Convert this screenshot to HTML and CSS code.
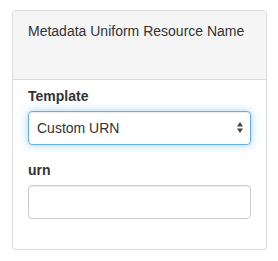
FILE: index.html
```html
<!DOCTYPE html>
<html lang="en">
<head>
    <meta charset="UTF-8">
    <meta name="viewport" content="width=device-width, initial-scale=1.0">
    <title>Metadata URN</title>
    <link rel="stylesheet" href="styles.css">
</head>
<body>
    <div class="panel">
        <!-- Heading -->
        <div class="panel-heading">Metadata Uniform Resource Name</div>

        <!-- Form -->
        <div class="panel-body">
            <div class="form-group">
                <label for="template">Template</label>
                <div class="select-wrap">
                    <select id="template" class="form-control focused">
                        <option>Custom URN</option>
                    </select>
                    <svg class="select-arrows" width="6" height="11" viewBox="0 0 6 11">
                        <path d="M3 0 L6 4.5 L0 4.5 Z" fill="#444"/>
                        <path d="M0 6.5 L6 6.5 L3 11 Z" fill="#444"/>
                    </svg>
                </div>
            </div>
            <div class="form-group">
                <label for="urn">urn</label>
                <input type="text" id="urn" class="form-control">
            </div>
        </div>
    </div>
</body>
</html>
```

FILE: styles.css
```css
body {
    font-family: "Liberation Sans", Arial, sans-serif;
    font-size: 14px;
    line-height: 20px;
    margin: 0;
    padding: 10px 11px 0 12px;
    background-color: #fff;
    color: #333;
}
.panel {
    border: 1px solid #ddd;
    border-radius: 4px;
    box-shadow: 0 1px 1px rgba(0,0,0,0.05);
    background-color: #fff;
}
.panel-heading {
    background-color: #f5f5f5;
    border-bottom: 1px solid #ddd;
    border-radius: 3px 3px 0 0;
    padding: 10px 15px 38px;
    color: #333;
}
.panel-body {
    padding: 6px 15px 15px;
}
.form-group {
    margin-bottom: 15px;
}
.form-group:last-child {
    margin-bottom: 15px;
}
label {
    display: block;
    font-weight: bold;
    margin-bottom: 5px;
}
.form-control {
    display: block;
    box-sizing: border-box;
    width: 100%;
    height: 34px;
    padding: 6px 12px;
    font-family: inherit;
    font-size: 14px;
    color: #555;
    background-color: #fff;
    border: 1px solid #ccc;
    border-radius: 4px;
    box-shadow: inset 0 1px 1px rgba(0,0,0,0.075);
    outline: none;
}
.select-wrap {
    position: relative;
}
select.form-control {
    -webkit-appearance: none;
    appearance: none;
    padding-left: 8px;
    color: #333;
}
.focused {
    border-color: #66afe9;
    box-shadow: inset 0 1px 1px rgba(0,0,0,0.075), 0 0 8px rgba(102,175,233,0.6);
}
.select-arrows {
    position: absolute;
    right: 8px;
    top: 11px;
}
```
